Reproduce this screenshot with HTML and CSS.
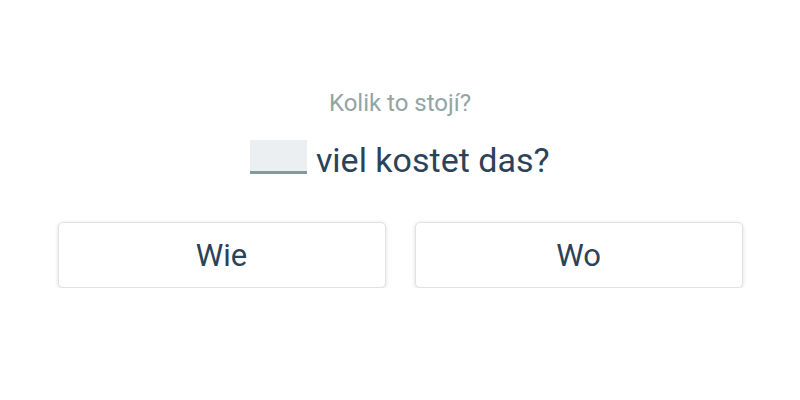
FILE: index.html
```html
<!DOCTYPE html>
<html lang="de">
<head>
<meta charset="utf-8">
<link rel="stylesheet" href="styles.css">
</head>
<body>
<main class="exercise">
  <p class="hint">Kolik to stojí?</p>
  <p class="sentence"><span class="blank"></span> viel kostet das?</p>
  <div class="choices">
    <button class="choice">Wie</button>
    <button class="choice">Wo</button>
  </div>
</main>
</body>
</html>
```
FILE: styles.css
```css
html, body {
  margin: 0;
  padding: 0;
  background: #ffffff;
}
body {
  font-family: Roboto, "Liberation Sans", sans-serif;
  color: #2c4258;
}
.exercise {
  display: flex;
  flex-direction: column;
  align-items: center;
  padding-top: 89px;
}
.hint {
  margin: 0;
  font-size: 24px;
  line-height: 28px;
  color: #93a4a6;
}
.sentence {
  margin: 23px 0 0;
  font-size: 34px;
  line-height: 40px;
  white-space: pre;
}
.blank {
  display: inline-block;
  width: 57px;
  height: 31px;
  vertical-align: -2px;
  background: #eceff1;
  border-bottom: 3px solid #83999b;
}
.choices {
  display: flex;
  gap: 29px;
  margin-top: 42px;
}
.choice {
  width: 328px;
  height: 66px;
  padding: 0;
  background: #ffffff;
  border: 1px solid #e0e2e4;
  border-radius: 5px;
  box-shadow: 0 1px 4px rgba(0, 0, 0, 0.14);
  font-family: Roboto, "Liberation Sans", sans-serif;
  font-size: 31px;
  color: #2c4258;
}
```
